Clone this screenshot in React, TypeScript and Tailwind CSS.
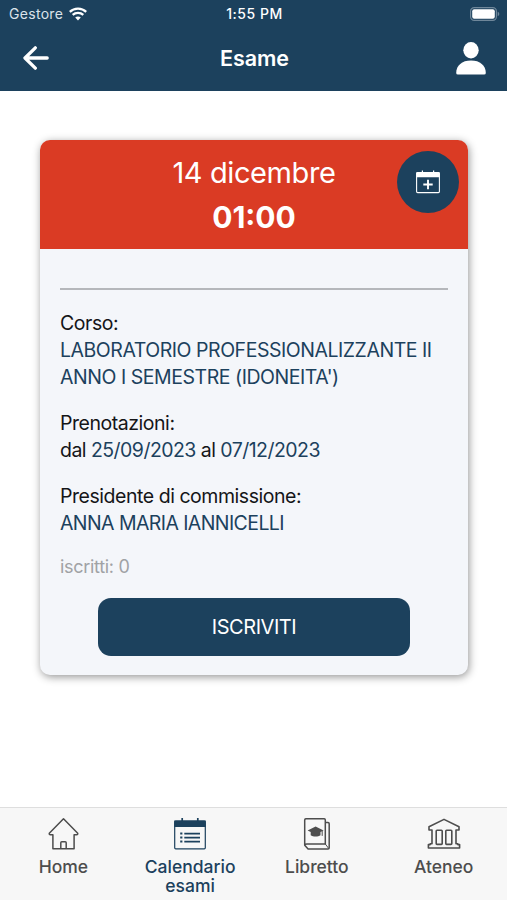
import type { ReactNode } from "react";

interface TabItemProps {
  icon: ReactNode;
  label: string;
  active?: boolean;
}

interface FieldProps {
  label: string;
  children: ReactNode;
}

const WifiIcon = () => (
  <svg width="18" height="14" viewBox="0 0 18 14" fill="none" stroke="white" strokeWidth="2.2" aria-hidden="true">
    <path d="M0.8 4.9C5.3 0.5 12.7 0.5 17.2 4.9" />
    <path d="M3.7 7.9C6.6 5.1 11.4 5.1 14.3 7.9" />
    <path d="M9 13.4L6.2 10.5C7.7 9.2 10.3 9.2 11.8 10.5Z" fill="white" stroke="none" />
  </svg>
);

const BatteryIcon = () => (
  <svg width="30" height="14" viewBox="0 0 30 14" fill="none" aria-hidden="true">
    <rect x="0.6" y="0.6" width="25.8" height="12.8" rx="3.6" stroke="#6f879a" strokeWidth="1.2" />
    <rect x="2.2" y="2.2" width="22.6" height="9.6" rx="2" fill="white" />
    <path d="M27.7 4.8C29.8 5.5 29.8 8.5 27.7 9.2Z" fill="#6f879a" />
  </svg>
);

const BackIcon = () => (
  <svg width="26" height="24" viewBox="0 0 26 24" fill="none" stroke="white" strokeWidth="3.3" strokeLinecap="round" strokeLinejoin="round" aria-hidden="true">
    <path d="M12.3 1.8L2 12L12.3 22.2M2.4 12H24.2" />
  </svg>
);

const UserIcon = () => (
  <svg width="30" height="33" viewBox="0 0 30 33" fill="white" aria-hidden="true">
    <ellipse cx="15" cy="8.3" rx="7.7" ry="8.2" />
    <path d="M0.2 31C0.2 23.2 6 18.4 15 18.4S29.8 23.2 29.8 31Q29.8 32.6 28 32.6H2Q0.2 32.6 0.2 31Z" />
  </svg>
);

const CalendarAddIcon = () => (
  <svg width="24" height="24" viewBox="0 0 24 24" fill="none" stroke="white" aria-hidden="true">
    <rect x="0.6" y="2.6" width="22.8" height="20" rx="1" strokeWidth="1.1" />
    <path d="M0.4 2.2H23.6V7.3H0.4Z" fill="white" stroke="none" />
    <path d="M6.4 0.6V3M17.6 0.6V3" strokeWidth="1.2" />
    <path d="M12 9.8V19.2M7.3 14.5H16.7" strokeWidth="1.9" />
  </svg>
);

const HomeIcon = () => (
  <svg width="32" height="34" viewBox="0 0 32 34" fill="none" stroke="currentColor" strokeWidth="1.5" strokeLinejoin="round" aria-hidden="true">
    <path d="M16.5 1.7L2.3 16.2Q2 17.7 3.3 17.7H5.9V31.8H27.1V17.7H29.7Q31 17.7 30.7 16.2Z" />
    <path d="M13.8 31.8V25.7Q13.8 24.7 14.8 24.7H18.2Q19.2 24.7 19.2 25.7V31.8" />
  </svg>
);

const CalendarIcon = () => (
  <svg width="32" height="34" viewBox="0 0 32 34" fill="none" stroke="currentColor" aria-hidden="true">
    <rect x="0.7" y="4.2" width="30.6" height="27.6" rx="1" strokeWidth="1.2" />
    <path d="M0.2 3.5H31.8V10H0.2Z" fill="currentColor" stroke="none" />
    <path d="M8.2 1V4M23.8 1V4" strokeWidth="1.7" />
    <path d="M10.3 16.6H26M10.3 20.6H26M10.3 24.6H26" strokeWidth="1.7" />
    <path d="M6.2 16.6H8.4M6.2 20.6H8.4M6.2 24.6H8.4" strokeWidth="2" />
  </svg>
);

const BookIcon = () => (
  <svg width="28" height="34" viewBox="0 0 28 34" fill="none" stroke="currentColor" strokeWidth="1.5" strokeLinejoin="round" aria-hidden="true">
    <path d="M1.7 28V3Q1.7 1.8 2.9 1.8H21.2Q22.3 1.8 22.3 3V27H3.7Q1.7 27 1.7 28.2L5.1 32H25Q26.2 32 26.2 30.8V6.8Q26.2 5.6 25 5.6H22.3" />
    <path d="M22.3 27L25.6 31.3" strokeWidth="1" />
    <path d="M12.6 9.6L20.6 13.5L17.5 15V18.2C15.3 20 9.9 20 7.7 18.2V15L4.6 13.5Z" fill="currentColor" stroke="none" />
    <path d="M19.2 14V18.9" strokeWidth="1" />
  </svg>
);

const UniversityIcon = () => (
  <svg width="34" height="34" viewBox="0 0 34 34" fill="none" stroke="currentColor" strokeWidth="1.6" strokeLinejoin="round" aria-hidden="true">
    <path d="M17 2.4L2 9.8V13H5V26.8H3.2V27.6H1.4V31H32.6V27.6H30.8V26.8H29V13H32V9.8Z" />
    <rect x="9.2" y="13.2" width="6" height="14.2" rx="0.8" />
    <rect x="18.8" y="13.2" width="6" height="14.2" rx="0.8" />
  </svg>
);

const Field = ({ label, children }: FieldProps) => (
  <div className="mb-[19px] text-[19.5px] leading-[27px] tracking-[-0.46px] text-[#1c415d]">
    <p className="text-[#141518]">{label}</p>
    <p className="whitespace-nowrap">{children}</p>
  </div>
);

const TabItem = ({ icon, label, active = false }: TabItemProps) => (
  <button
    type="button"
    className={`flex flex-1 flex-col items-center pt-[9px] ${active ? "text-[#1c415d]" : "text-[#4d4d4d]"}`}
  >
    {icon}
    <span className="mt-[6px] w-[110px] text-center text-[17.5px] leading-[19px] font-medium">
      {label}
    </span>
  </button>
);

export default function App() {
  return (
    <div className="flex h-[900px] w-[507px] flex-col overflow-hidden bg-white font-['Inter',sans-serif]">
      <header className="h-[91px] shrink-0 bg-[#1c415d] text-white">
        <div className="grid h-[27px] grid-cols-3 items-center pr-[7px] pl-[9px] text-[14px]">
          <div className="flex items-center gap-[6px] tracking-[0.3px] text-[#dbe3ea]">
            <span>Gestore</span>
            <WifiIcon />
          </div>
          <span className="text-center text-[14px] font-medium tracking-[0.5px]">1:55 PM</span>
          <div className="flex justify-end">
            <BatteryIcon />
          </div>
        </div>
        <div className="grid h-[62px] grid-cols-3 items-center pr-[21px] pl-[23px]">
          <button type="button" aria-label="Indietro">
            <BackIcon />
          </button>
          <h1 className="pt-px text-center text-[21.5px] font-semibold tracking-[-0.1px]">Esame</h1>
          <button type="button" aria-label="Profilo" className="flex justify-end">
            <UserIcon />
          </button>
        </div>
      </header>

      <main className="flex-1 px-10 pt-[49px]">
        <section className="h-[535px] w-[428px] overflow-hidden rounded-[10px] bg-[#f4f6fa] shadow-[1px_2px_8px_rgba(0,0,0,0.42)]">
          <div className="relative flex h-[109px] flex-col items-center bg-[#da3b24] pt-[10px] text-white">
            <p className="text-[29px] leading-[45px] tracking-[-0.4px]">14 dicembre</p>
            <p className="text-[30px] leading-[45px] font-bold">01:00</p>
            <button
              type="button"
              aria-label="Aggiungi al calendario"
              className="absolute top-[11px] right-[9px] flex size-[62px] items-center justify-center rounded-full bg-[#1c415d]"
            >
              <CalendarAddIcon />
            </button>
          </div>

          <div className="px-5 pt-[39px]">
            <hr className="mb-[20px] border-t-2 border-[#b5b7bb]" />
            <Field label="Corso:">
              LABORATORIO PROFESSIONALIZZANTE II
              <br />
              ANNO I SEMESTRE (IDONEITA')
            </Field>
            <Field label="Prenotazioni:">
              <span className="tracking-[-0.54px]">
                <span className="text-[#141518]">dal</span> 25/09/2023{" "}
                <span className="text-[#141518]">al</span> 07/12/2023
              </span>
            </Field>
            <Field label="Presidente di commissione:">
              <span className="tracking-[-0.58px]">ANNA MARIA IANNICELLI</span>
            </Field>
            <p className="text-[18px] leading-[22px] tracking-[-0.3px] text-[#a0a2a5]">iscritti: 0</p>
            <button
              type="button"
              className="mx-auto mt-5 block h-[58px] w-[312px] rounded-[13px] bg-[#1c415d] text-[20px] tracking-[-0.45px] text-white"
            >
              ISCRIVITI
            </button>
          </div>
        </section>
      </main>

      <nav className="flex h-[93px] shrink-0 items-start border-t border-[#dedede] bg-[#f7f7f7]">
        <TabItem icon={<HomeIcon />} label="Home" />
        <TabItem icon={<CalendarIcon />} label="Calendario esami" active />
        <TabItem icon={<BookIcon />} label="Libretto" />
        <TabItem icon={<UniversityIcon />} label="Ateneo" />
      </nav>
    </div>
  );
}
